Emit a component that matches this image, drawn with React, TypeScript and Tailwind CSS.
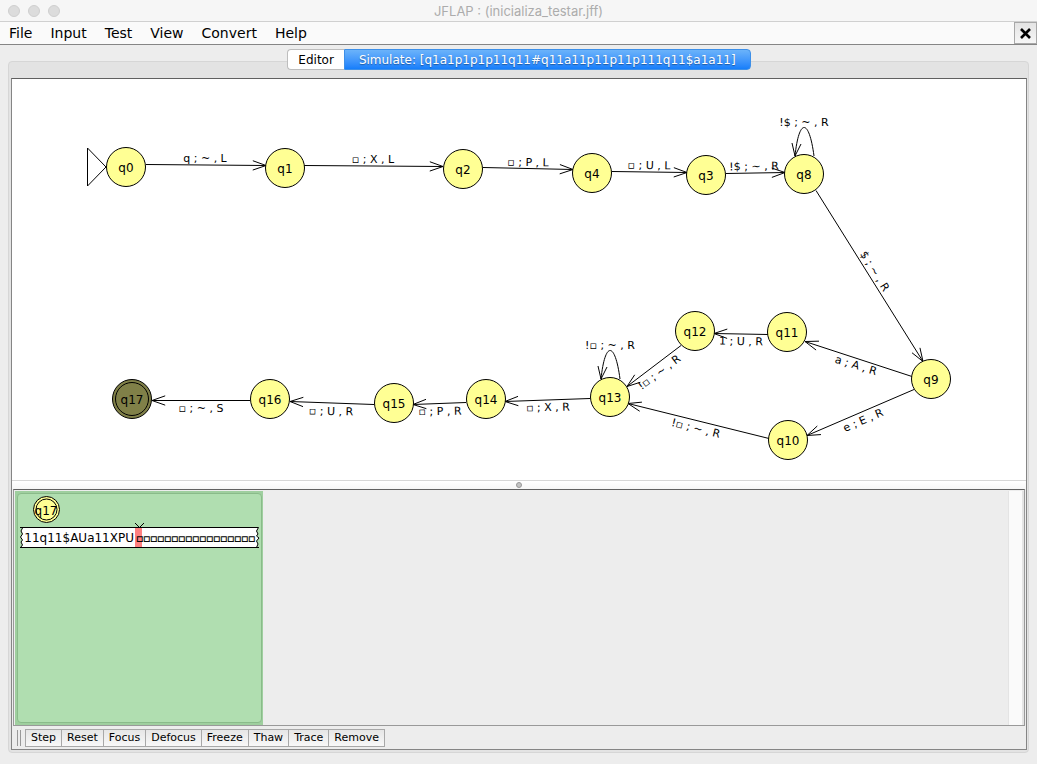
import React from "react";

type Point = [number, number];

const states: { name: string; x: number; y: number; current?: boolean }[] = [
  { name: "q0", x: 126, y: 167 },
  { name: "q1", x: 285, y: 168 },
  { name: "q2", x: 463, y: 169 },
  { name: "q4", x: 592, y: 173 },
  { name: "q3", x: 706, y: 175 },
  { name: "q8", x: 804, y: 174 },
  { name: "q12", x: 695, y: 331 },
  { name: "q11", x: 787, y: 332 },
  { name: "q9", x: 931, y: 379 },
  { name: "q10", x: 788, y: 440 },
  { name: "q13", x: 610, y: 397 },
  { name: "q14", x: 486, y: 399 },
  { name: "q15", x: 394, y: 403 },
  { name: "q16", x: 270, y: 399 },
  { name: "q17", x: 132, y: 399, current: true },
];

const transitions: { from: Point; to: Point; label: string; at: Point; angle: number }[] = [
  { from: [146, 164], to: [266, 165], label: "q ; ~ , L", at: [205, 158], angle: 0 },
  { from: [304, 165], to: [443, 166], label: "▫ ; X , L", at: [373, 159], angle: 0 },
  { from: [483, 167], to: [573, 169], label: "▫ ; P , L", at: [528, 162], angle: 1 },
  { from: [612, 171], to: [687, 172], label: "▫ ; U , L", at: [649, 165], angle: 1 },
  { from: [726, 173], to: [785, 172], label: "!$ ; ~ , R", at: [754, 166], angle: -1 },
  { from: [816, 190], to: [923, 361], label: "$ ; ~ , R", at: [875, 271], angle: 58 },
  { from: [912, 376], to: [805, 341], label: "a ; A , R", at: [856, 365], angle: 17 },
  { from: [914, 389], to: [807, 435], label: "e ; E , R", at: [863, 420], angle: -23 },
  { from: [768, 334], to: [714, 333], label: "1 ; U , R", at: [741, 341], angle: 1 },
  { from: [681, 345], to: [627, 386], label: "!▫ ; ~ , R", at: [659, 372], angle: -37 },
  { from: [769, 438], to: [628, 403], label: "!▫ ; ~ , R", at: [696, 428], angle: 14 },
  { from: [590, 398], to: [505, 401], label: "▫ ; X , R", at: [548, 407], angle: -1 },
  { from: [466, 402], to: [413, 404], label: "▫ ; P , R", at: [440, 411], angle: -1 },
  { from: [374, 404], to: [290, 401], label: "▫ ; U , R", at: [331, 411], angle: 1 },
  { from: [250, 400], to: [152, 400], label: "▫ ; ~ , S", at: [201, 408], angle: 0 },
];

function headPath(tip: Point, angle: number) {
  const tail = (a: number) => `${tip[0] - 14 * Math.cos(a)} ${tip[1] + 0.5 - 14 * Math.sin(a)}`;
  return `M${tail(angle + 0.34)} L${tip[0]} ${tip[1] + 0.5} L${tail(angle - 0.34)}`;
}

function Label({ at, angle, children }: { at: Point; angle: number; children: string }) {
  return (
    <text
      transform={`translate(${at[0]} ${at[1]}) rotate(${angle})`}
      y={4}
      textAnchor="middle"
      className="fill-black stroke-none text-[11px]"
    >
      {children}
    </text>
  );
}

function Loop({ x, y, label }: { x: number; y: number; label: string }) {
  return (
    <g>
      <path d={`M${x + 10} ${y - 18} C${x + 5} ${y - 56} ${x - 5} ${y - 56} ${x - 9} ${y - 18}`} />
      <path d={`M${x - 12} ${y - 31} L${x - 9} ${y - 18} L${x - 3} ${y - 30}`} />
      <Label at={[x, y - 52]} angle={0}>{label}</Label>
    </g>
  );
}

function Automaton() {
  return (
    <svg
      width="1013"
      height="400"
      viewBox="13 80 1013 400"
      className="block max-w-none shrink-0 fill-none stroke-black"
      role="img"
      aria-label="Turing machine diagram"
    >
      <path d="M87.5 148 L87.5 186 L106 167 Z" />
      {transitions.map((t) => (
        <g key={`${t.from}-${t.to}`}>
          <path d={`M${t.from[0]} ${t.from[1] + 0.5} L${t.to[0]} ${t.to[1] + 0.5}`} />
          <path d={headPath(t.to, Math.atan2(t.to[1] - t.from[1], t.to[0] - t.from[0]))} />
          <Label at={t.at} angle={t.angle}>{t.label}</Label>
        </g>
      ))}
      <Loop x={804} y={174} label="!$ ; ~ , R" />
      <Loop x={610} y={397} label="!▫ ; ~ , R" />
      {states.map((s) => (
        <g key={s.name}>
          <circle cx={s.x} cy={s.y} r={19.5} className={s.current ? "fill-[#808048]" : "fill-[#ffff94]"} />
          {s.current && <circle cx={s.x} cy={s.y} r={16.5} />}
          <text x={s.x} y={s.y + 5} textAnchor="middle" className="fill-black stroke-none text-[12px]">
            {s.name}
          </text>
        </g>
      ))}
    </svg>
  );
}

const blanks = Array.from({ length: 17 }, (_, i) => 136 + i * 7);

function Configuration() {
  return (
    <svg
      width="243"
      height="60"
      viewBox="18 494 243 60"
      className="block fill-none stroke-black"
      role="img"
      aria-label="Tape of configuration q17"
    >
      <circle cx="46.5" cy="509.5" r="13" className="fill-[#ffff94]" />
      <circle cx="46.5" cy="509.5" r="10.5" />
      <text x="46" y="515" textAnchor="middle" className="fill-black stroke-none text-[12px]">q17</text>
      <path
        d="M20 527.5 H258.5 L256.5 531 L258 534 L256.5 536 L259 538 L256.5 541 L258 544 L256.5 547.5 H20.5 L22.5 545 L21 542 L22.5 540 L20.5 537 L22.5 534 L21 531 L22.5 528"
        className="fill-white"
      />
      <path d="M20 547.5 H259" />
      <rect x="135" y="528" width="7" height="19" className="fill-[#ff8080] stroke-none" />
      <path d="M135 523 L139.5 527.5 L144 523" />
      <text x="134" y="542" textAnchor="end" className="fill-black stroke-none text-[12px]">11q11$AUa11XPU</text>
      <text x={blanks.join(" ")} y="542" className="fill-black stroke-black stroke-[0.3] text-[11px]">
        {"▫".repeat(17)}
      </text>
    </svg>
  );
}

export default function App() {
  return (
    <div className="flex min-h-screen flex-col bg-[#ededed] font-['DejaVu_Sans',sans-serif] text-black">
      <header className="grid h-[22px] grid-cols-[1fr_auto_1fr] items-center border-b border-[#d0d0d0] bg-[#f6f6f6] px-2">
        <div className="flex gap-2">
          {["Close", "Minimize", "Zoom"].map((n) => (
            <button key={n} aria-label={n} className="size-3 rounded-full border border-[#cfcfcf] bg-[#dcdcdc]" />
          ))}
        </div>
        <h1 className="font-[Inter,sans-serif] text-[13px] leading-5 text-[#acacac]">
          JFLAP : (inicializa_testar.jff)
        </h1>
      </header>

      <nav className="flex h-[23px] items-stretch justify-between border-b border-[#858585] bg-[#fafafa]">
        <div className="flex">
          {["File", "Input", "Test", "View", "Convert", "Help"].map((m) => (
            <button key={m} className="px-[9px] text-[14px] leading-5">{m}</button>
          ))}
        </div>
        <button
          aria-label="Dismiss tab"
          className="flex w-[23px] items-center justify-center border border-[#a8a8a8] bg-linear-to-b from-[#e4e4e4] to-[#f6f6f6]"
        >
          <svg width="11" height="11" viewBox="0 0 11 11" className="stroke-black stroke-[2.6]">
            <path d="M1 1 L10 10 M10 1 L1 10" />
          </svg>
        </button>
      </nav>

      <div className="flex flex-1 flex-col px-2 pt-4 pb-[11px]">
        <main className="flex flex-1 flex-col rounded-[4px] border border-[#d6d6d6] bg-[#e3e3e3] pr-px pb-[2px] pl-[2px]">
          <div className="-mt-[13px] mb-2 flex h-[21px] justify-center" role="tablist">
            <button
              role="tab"
              aria-selected={false}
              className="rounded-l-[4px] border border-r-0 border-[#bdbdbd] bg-white px-[10px] text-[12px] leading-4"
            >
              Editor
            </button>
            <button
              role="tab"
              aria-selected={true}
              className="rounded-r-[4px] border border-[#3d8fe8] bg-linear-to-b from-[#6bb3fa] to-[#147efb] px-[14px] text-[12px] leading-4 text-white [text-shadow:0_1px_1px_rgba(0,0,0,0.35)]"
            >
              Simulate: [q1a1p1p1p11q11#q11a11p11p11p111q11$a1a11]
            </button>
          </div>

          <div className="flex flex-1 flex-col border border-[#858585] border-t-[#606060] bg-[#ededed]">
            <section className="flex overflow-hidden border-b border-[#d6d6d6] bg-white pt-px pl-px">
              <Automaton />
            </section>
            <div className="flex h-2 items-center justify-center bg-linear-to-b from-white to-[#f6f6f6]">
              <span className="size-[6px] rounded-full border border-[#989898] bg-[#c4c4c4]" />
            </div>
            <section className="mr-px ml-px flex flex-1 justify-between border border-[#999999] border-t-[#606060] pt-px pl-px">
              <div className="flex w-[248px] bg-[#9fcf9f] p-[2px]">
                <div className="flex-1 rounded-[4px] border border-[#8abb8a] bg-[#b0deb0]">
                  <Configuration />
                </div>
              </div>
              <div className="w-4 border-r-2 border-l border-[#e4e4e4] bg-[#fafafa]" />
            </section>
            <div className="flex h-[23px] items-center pl-[5px]" role="toolbar" aria-label="Simulation">
              <span className="mr-1 h-4 w-1 border-x border-[#999999]" />
              <div className="flex pl-px">
                {["Step", "Reset", "Focus", "Defocus", "Freeze", "Thaw", "Trace", "Remove"].map((b) => (
                  <button
                    key={b}
                    className="-ml-px h-[18px] border border-[#a8a8a8] bg-linear-to-b from-[#e6e6e6] to-[#f8f8f8] px-[5px] text-[11px] leading-4"
                  >
                    {b}
                  </button>
                ))}
              </div>
            </div>
          </div>
        </main>
      </div>
    </div>
  );
}
